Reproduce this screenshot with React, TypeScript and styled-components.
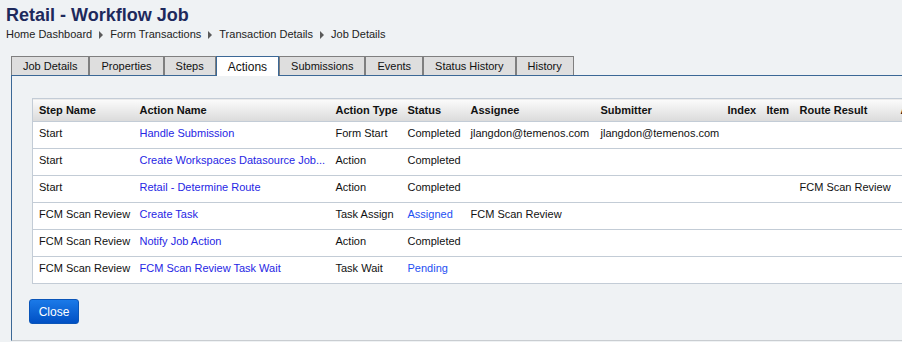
import React from "react";
import styled, { createGlobalStyle } from "styled-components";

const GlobalStyle = createGlobalStyle`
  html, body {
    margin: 0;
    padding: 0;
    background: #eff2f4;
    overflow: hidden;
  }
  body {
    font-family: "Liberation Sans", Arial, sans-serif;
    font-size: 11px;
    color: #111;
  }
`;

const Page = styled.div`
  width: 1200px;
  height: 342px;
`;

const Header = styled.header`
  padding: 5px 0 0 6px;
`;

const Title = styled.h1`
  margin: 0;
  font-size: 18px;
  line-height: 21px;
  font-weight: bold;
  color: #1d295c;
`;

const Breadcrumb = styled.nav`
  margin-top: 2px;
  display: flex;
  align-items: center;
  font-size: 11px;
  line-height: 13px;
  color: #222;
`;

const Crumb = styled.span``;

const CrumbArrow = styled.span`
  display: inline-block;
  width: 0;
  height: 0;
  margin: 0 7px 0 7px;
  border-left: 4px solid #5a5a5a;
  border-top: 4px solid transparent;
  border-bottom: 4px solid transparent;
`;

const Workspace = styled.div`
  margin: 15px 0 0 11px;
`;

const TabStrip = styled.div`
  display: flex;
  align-items: flex-end;
  border-bottom: 1px solid #3b6896;
  height: 19px;
`;

const Tab = styled.div<{ $active?: boolean }>`
  box-sizing: border-box;
  padding: 0 11px;
  height: ${(p) => (p.$active ? "20px" : "19px")};
  line-height: ${(p) => (p.$active ? "20px" : "18px")};
  margin-bottom: ${(p) => (p.$active ? "-1px" : "0")};
  border: 1px solid ${(p) => (p.$active ? "#3b6896" : "#7f7f7f")};
  border-bottom: none;
  background: ${(p) => (p.$active ? "#ffffff" : "#dedede")};
  font-size: ${(p) => (p.$active ? "12px" : "11px")};
  color: #111;
  white-space: nowrap;
`;

const Panel = styled.section`
  border-left: 1px solid #3b6896;
  border-bottom: 1px solid #c9cdd1;
  padding: 22px 20px 16px 17px;
  height: 226px;
  box-sizing: content-box;
`;

const Table = styled.table`
  margin-left: 3px;
  border-collapse: collapse;
  table-layout: fixed;
  width: 1000px;
  background: #ffffff;
  border: 1px solid #c3ccd6;
`;

const HeadCell = styled.th`
  height: 22px;
  padding: 0 6px;
  text-align: left;
  font-weight: bold;
  font-size: 11px;
  line-height: 13px;
  color: #111;
  white-space: nowrap;
  background: linear-gradient(#fbfbfb, #dadada);
  border-bottom: 1px solid #c3ccd6;
`;

const Row = styled.tr`
  border-bottom: 1px solid #c3ccd6;
`;

const Cell = styled.td<{ $tone?: "link" | "status" }>`
  height: 26px;
  box-sizing: border-box;
  padding: 5px 6px 8px 6px;
  vertical-align: top;
  font-size: 11px;
  line-height: 13px;
  white-space: nowrap;
  overflow: hidden;
  color: ${(p) =>
    p.$tone === "link" ? "#2626e4" : p.$tone === "status" ? "#1d4ff2" : "#111"};
`;

const Footer = styled.div`
  margin-top: 15px;
`;

const CloseButton = styled.button`
  width: 50px;
  height: 25px;
  padding: 0;
  border: 1px solid #0a55b8;
  border-radius: 3px;
  background: linear-gradient(#1b7ae8, #0050c4);
  color: #ffffff;
  font-family: "Liberation Sans", Arial, sans-serif;
  font-size: 12px;
  cursor: pointer;
`;

const columns = [
  { label: "Step Name", width: 101 },
  { label: "Action Name", width: 196 },
  { label: "Action Type", width: 72 },
  { label: "Status", width: 63 },
  { label: "Assignee", width: 130 },
  { label: "Submitter", width: 127 },
  { label: "Index", width: 39 },
  { label: "Item", width: 33 },
  { label: "Route Result", width: 101 },
  { label: "Assigned Date", width: 138 },
];

type RowData = {
  step: string;
  action: string;
  type: string;
  status: string;
  statusLink?: boolean;
  assignee?: string;
  submitter?: string;
  route?: string;
};

const rows: RowData[] = [
  {
    step: "Start",
    action: "Handle Submission",
    type: "Form Start",
    status: "Completed",
    assignee: "jlangdon@temenos.com",
    submitter: "jlangdon@temenos.com",
  },
  { step: "Start", action: "Create Workspaces Datasource Job...", type: "Action", status: "Completed" },
  {
    step: "Start",
    action: "Retail - Determine Route",
    type: "Action",
    status: "Completed",
    route: "FCM Scan Review",
  },
  {
    step: "FCM Scan Review",
    action: "Create Task",
    type: "Task Assign",
    status: "Assigned",
    statusLink: true,
    assignee: "FCM Scan Review",
  },
  { step: "FCM Scan Review", action: "Notify Job Action", type: "Action", status: "Completed" },
  {
    step: "FCM Scan Review",
    action: "FCM Scan Review Task Wait",
    type: "Task Wait",
    status: "Pending",
    statusLink: true,
  },
];

const tabs = [
  "Job Details",
  "Properties",
  "Steps",
  "Actions",
  "Submissions",
  "Events",
  "Status History",
  "History",
];

export default function App() {
  return (
    <Page>
      <GlobalStyle />
      <Header>
        <Title>Retail - Workflow Job</Title>
        <Breadcrumb>
          <Crumb>Home Dashboard</Crumb>
          <CrumbArrow />
          <Crumb>Form Transactions</Crumb>
          <CrumbArrow />
          <Crumb>Transaction Details</Crumb>
          <CrumbArrow />
          <Crumb>Job Details</Crumb>
        </Breadcrumb>
      </Header>
      <Workspace>
        <TabStrip>
          {tabs.map((t) => (
            <Tab key={t} $active={t === "Actions"}>
              {t}
            </Tab>
          ))}
        </TabStrip>
        <Panel>
          <Table>
            <colgroup>
              {columns.map((c) => (
                <col key={c.label} style={{ width: c.width }} />
              ))}
            </colgroup>
            <thead>
              <tr>
                {columns.map((c) => (
                  <HeadCell key={c.label}>{c.label}</HeadCell>
                ))}
              </tr>
            </thead>
            <tbody>
              {rows.map((r, i) => (
                <Row key={i}>
                  <Cell>{r.step}</Cell>
                  <Cell $tone="link">{r.action}</Cell>
                  <Cell>{r.type}</Cell>
                  <Cell $tone={r.statusLink ? "status" : undefined}>{r.status}</Cell>
                  <Cell>{r.assignee ?? ""}</Cell>
                  <Cell>{r.submitter ?? ""}</Cell>
                  <Cell />
                  <Cell />
                  <Cell>{r.route ?? ""}</Cell>
                  <Cell />
                </Row>
              ))}
            </tbody>
          </Table>
          <Footer>
            <CloseButton>Close</CloseButton>
          </Footer>
        </Panel>
      </Workspace>
    </Page>
  );
}
